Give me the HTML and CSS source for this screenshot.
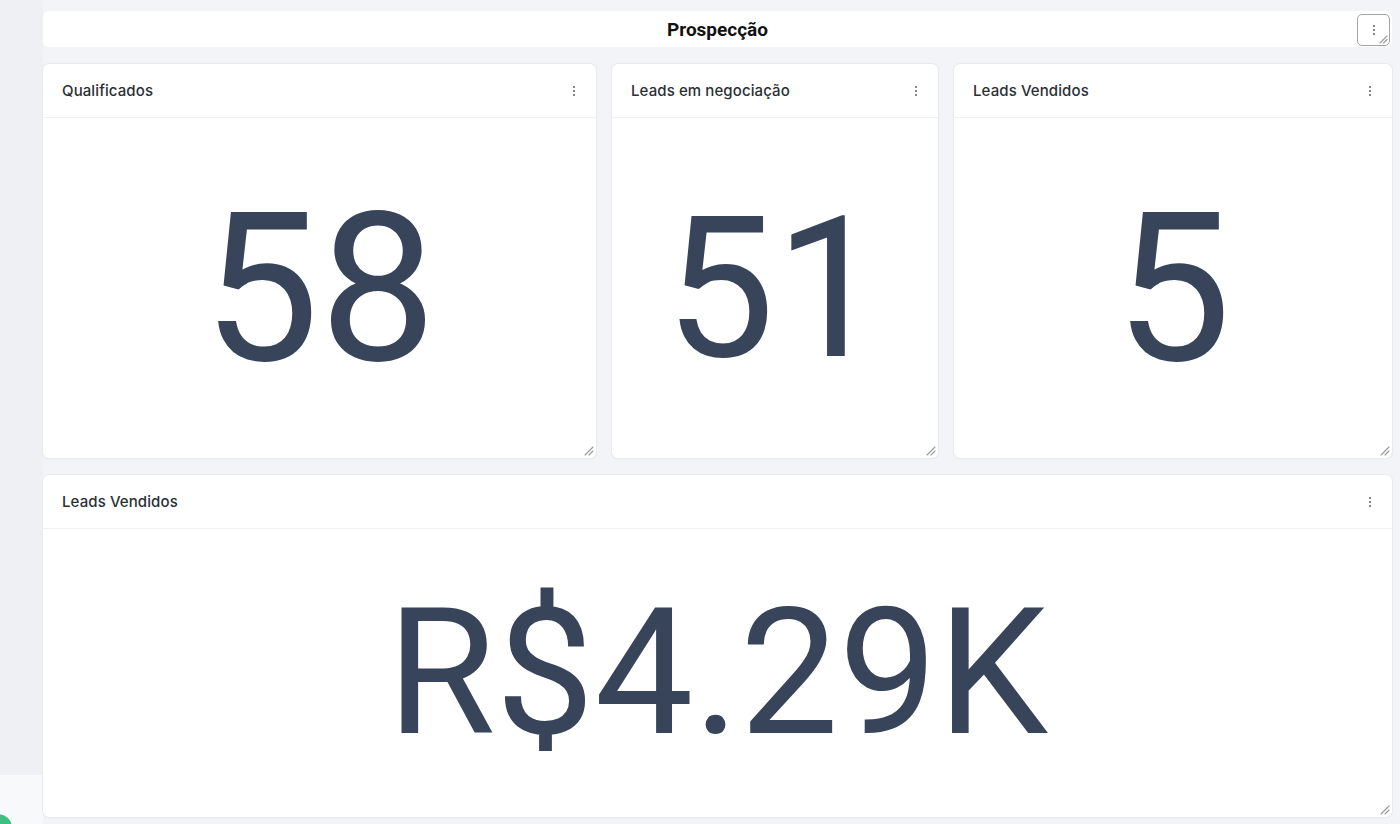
FILE: index.html
```html
<!DOCTYPE html>
<html lang="pt-BR">
<head>
<meta charset="utf-8">
<title>Prospecção</title>
<link rel="stylesheet" href="styles.css">
</head>
<body>
<div class="page">
  <aside class="sidebar">
    <div class="sidebar-top"></div>
    <div class="sidebar-bottom"></div>
  </aside>
  <main class="main">
    <header class="topbar">
      <h1 class="topbar-title">Prospecção</h1>
      <button class="topbar-btn" type="button" aria-label="Opções">
        <span class="dots"><i></i><i></i><i></i></span>
        <svg class="resize" width="10" height="10" viewBox="0 0 10 10"><path d="M9 2L2 9M9 5.5L5.5 9" stroke="#9a9a9a" stroke-width="1.1" stroke-linecap="round"/></svg>
      </button>
    </header>
    <section class="row row-top">
      <article class="card">
        <div class="card-head"><span class="card-title">Qualificados</span><span class="dots"><i></i><i></i><i></i></span></div>
        <div class="card-body"><span class="big">58</span></div>
        <svg class="resize" width="11" height="11" viewBox="0 0 11 11"><path d="M10 2L2 10M10 6L6 10" stroke="#9a9a9a" stroke-width="1.1" stroke-linecap="round"/></svg>
      </article>
      <article class="card">
        <div class="card-head"><span class="card-title">Leads em negociação</span><span class="dots"><i></i><i></i><i></i></span></div>
        <div class="card-body"><span class="big big-sm">51</span></div>
        <svg class="resize" width="11" height="11" viewBox="0 0 11 11"><path d="M10 2L2 10M10 6L6 10" stroke="#9a9a9a" stroke-width="1.1" stroke-linecap="round"/></svg>
      </article>
      <article class="card">
        <div class="card-head"><span class="card-title">Leads Vendidos</span><span class="dots"><i></i><i></i><i></i></span></div>
        <div class="card-body"><span class="big">5</span></div>
        <svg class="resize" width="11" height="11" viewBox="0 0 11 11"><path d="M10 2L2 10M10 6L6 10" stroke="#9a9a9a" stroke-width="1.1" stroke-linecap="round"/></svg>
      </article>
    </section>
    <section class="row row-bottom">
      <article class="card">
        <div class="card-head"><span class="card-title">Leads Vendidos</span><span class="dots"><i></i><i></i><i></i></span></div>
        <div class="card-body"><span class="big big-money">R$4.29K</span></div>
        <svg class="resize" width="11" height="11" viewBox="0 0 11 11"><path d="M10 2L2 10M10 6L6 10" stroke="#9a9a9a" stroke-width="1.1" stroke-linecap="round"/></svg>
      </article>
    </section>
  </main>
  <div class="fab"></div>
</div>
</body>
</html>
```
FILE: styles.css
```css
* { box-sizing: border-box; }
html, body { margin: 0; padding: 0; }
body {
  background: #f3f4f7;
  font-family: Inter, "Noto Sans", Roboto, sans-serif;
  color: #2b2f36;
  width: 1400px;
  height: 824px;
  overflow: hidden;
}
.page {
  display: flex;
  height: 824px;
  position: relative;
}
.sidebar {
  width: 43px;
  flex: none;
  display: flex;
  flex-direction: column;
}
.sidebar-top { height: 775px; background: #eff0f3; }
.sidebar-bottom { flex: 1; background: #f8f9fa; }
.main {
  flex: 1;
  padding: 11px 8px 0 0;
  display: flex;
  flex-direction: column;
  gap: 17px;
}
.topbar {
  height: 36px;
  background: #fff;
  border-radius: 6px;
  display: flex;
  align-items: center;
  justify-content: center;
  position: relative;
}
.topbar-title {
  margin: 0;
  font-family: Roboto, "Liberation Sans", sans-serif;
  font-size: 19px;
  font-weight: 700;
  color: #111;
}
.topbar-btn {
  position: absolute;
  right: 2px;
  top: 3px;
  width: 33px;
  height: 32px;
  border: 1.5px solid #a3a3a3;
  border-radius: 5px;
  background: #fff;
  padding: 0;
  display: flex;
  align-items: center;
  justify-content: center;
}
.topbar-btn .resize { position: absolute; right: 1px; bottom: 1px; }
.dots {
  display: flex;
  flex-direction: column;
  gap: 2px;
  width: 2px;
}
.dots i {
  display: block;
  width: 2px;
  height: 2px;
  border-radius: 50%;
  background: #5e5e5e;
}
.row { display: grid; gap: 16px; }
.row-top { grid-template-columns: 553px 326px 1fr; height: 394px; }
.row-bottom { grid-template-columns: 1fr; height: 342px; }
.card {
  background: #fff;
  border-radius: 6px;
  box-shadow: 0 0 0 1px #e9eaee, 0 1px 2px rgba(0,0,0,0.06);
  display: flex;
  flex-direction: column;
  position: relative;
  overflow: hidden;
}
.card-head {
  height: 54px;
  flex: none;
  display: flex;
  align-items: center;
  justify-content: space-between;
  padding: 0 21px 0 19px;
  border-bottom: 1px solid #f0f1f3;
}
.card-title {
  font-size: 15px;
  font-weight: 500;
  color: #2b2f36;
  letter-spacing: 0.1px;
}
.card-body {
  flex: 1;
  display: flex;
  align-items: center;
  justify-content: center;
}
.big {
  font-family: Roboto, "Liberation Sans", sans-serif;
  font-size: 208px;
  font-weight: 400;
  line-height: 1;
  color: #374459;
  padding-top: 2px;
}
.big-sm { font-size: 196px; }
.big-money { font-size: 176px; padding-top: 0; }
.card > .resize { position: absolute; right: 2px; bottom: 2px; }
.fab {
  position: absolute;
  left: -16px;
  bottom: -18px;
  width: 28px;
  height: 28px;
  border-radius: 50%;
  background: #3fbf7f;
}
```
